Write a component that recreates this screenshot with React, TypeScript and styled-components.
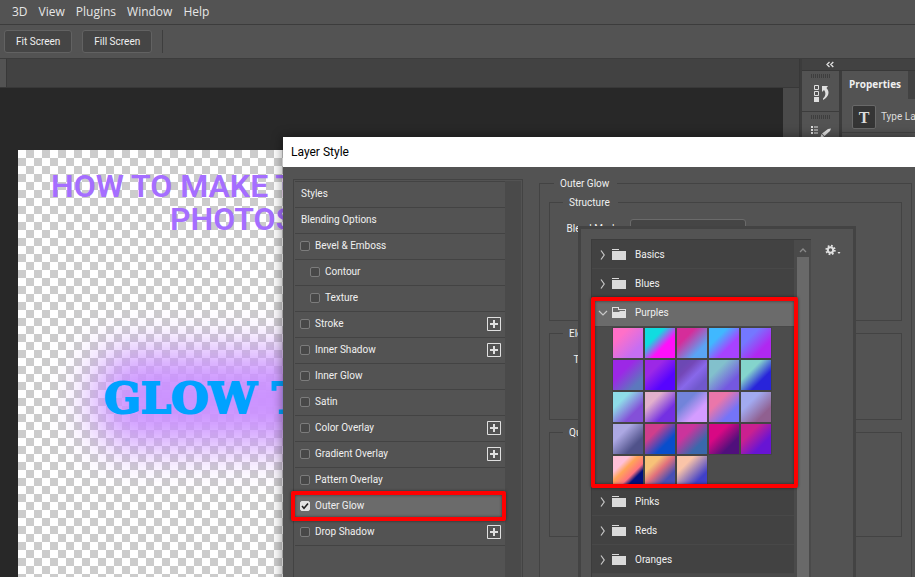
import React from "react";
import styled, { createGlobalStyle } from "styled-components";

const Global = createGlobalStyle`
  * { box-sizing: border-box; }
  html, body, #root { height: 100%; margin: 0; }
  body { overflow: hidden; background: #282828; }
  button, input, select { font: inherit; color: inherit; margin: 0; }
`;

const c = {
  panel: "#535353",
  line: "#434343",
  deep: "#424242",
  gutter: "#4a4a4a",
  text: "#f0f0f0",
  red: "#ff0000",
};

const Page = styled.div`
  position: relative;
  display: flex;
  flex-direction: column;
  height: 100vh;
  overflow: hidden;
  background: ${c.panel};
  color: ${c.text};
  font: 10px/14px Roboto, "Noto Sans", sans-serif;
`;

const MenuBar = styled.nav`
  display: flex;
  gap: 11px;
  height: 25px;
  padding: 0 12px;
  align-items: center;
  border-bottom: 1px solid #3c3c3c;
`;

const MenuButton = styled.button`
  padding: 0;
  border: 0;
  background: none;
  color: #e6e6e6;
  font: 12px/16px "Open Sans", sans-serif;
`;

const OptionsBar = styled.div`
  display: flex;
  align-items: center;
  gap: 10px;
  height: 34px;
  padding: 0 4px;
  border-bottom: 1px solid #3c3c3c;
`;

const OptionButton = styled.button`
  height: 23px;
  padding: 0 11px;
  border: 1px solid #626262;
  border-radius: 3px;
  background: #454545;
  white-space: nowrap;
`;

const Divider = styled.span`
  width: 1px;
  height: 23px;
  background: #3e3e3e;
`;

const Workspace = styled.div`
  display: flex;
  flex: 1;
  min-height: 0;
`;

const DocumentPane = styled.main`
  display: flex;
  flex-direction: column;
  flex: 1;
  min-width: 0;
`;

const TabStrip = styled.div`
  height: 29px;
  background: ${c.deep};
  border-bottom: 1px solid #383838;
`;

const DocumentTab = styled.div`
  width: 7px;
  height: 28px;
  background: ${c.panel};
  border-right: 1px solid #383838;
`;

const CanvasRow = styled.div`
  display: flex;
  flex: 1;
  min-height: 0;
`;

const CanvasArea = styled.div`
  flex: 1;
  min-width: 0;
  display: flex;
  padding: 62px 60px 0 18px;
  background: #282828;
`;

const CanvasScroll = styled.div`
  width: 16px;
  background: ${c.gutter};
`;

const Artboard = styled.div`
  flex: 1;
  overflow: hidden;
  white-space: nowrap;
  padding-top: 20px;
  background: repeating-conic-gradient(#ccc 0 25%, #fff 0 50%) 0 0 / 16px 16px;
`;

const Headline = styled.div<{ $indent: number }>`
  padding-left: ${(p) => p.$indent}px;
  font: 600 32px/33px Roboto, sans-serif;
  color: #a56eff;
`;

const Glow = styled.div`
  position: relative;
  isolation: isolate;
  width: 400px;
  height: 40px;
  margin: 143px 0 0 86px;
  font: 700 43px/38px "DejaVu Serif", serif;
  color: #00a2ff;
  -webkit-text-stroke: 2px #00a2ff;
  &::before {
    content: "";
    position: absolute;
    z-index: -1;
    inset: -26px -8px;
    border-radius: 30px;
    background: #cb92ff;
    filter: blur(22px);
  }
`;

const Dock = styled.aside`
  width: 116px;
  display: flex;
  flex-direction: column;
  border-left: 1px solid #383838;
  background: #3c3c3c;
`;

const DockHeader = styled.div`
  height: 12px;
  margin-left: 2px;
  background: ${c.deep};
  padding: 2px 0 0 24px;
  border-bottom: 1px solid #383838;
  svg { display: block; }
`;

const DockColumns = styled.div`
  display: flex;
  gap: 3px;
  flex: 1;
  padding-left: 2px;
`;

const IconColumn = styled.div`
  width: 37px;
  display: flex;
  flex-direction: column;
  gap: 1px;
`;

const DockIcon = styled.button`
  display: flex;
  height: 40px;
  padding: 3px 0 0 9px;
  border: 0;
  background: ${c.panel};
  svg { display: block; flex: none; }
`;

const Properties = styled.div`
  flex: 1;
  min-width: 0;
  background: ${c.panel};
  overflow: hidden;
`;

const PropertyTabs = styled.div`
  display: flex;
  height: 28px;
  background: ${c.deep};
`;

const PropertyTab = styled.button`
  width: 66px;
  padding: 0 0 2px;
  border: 0;
  flex: none;
  background: ${c.panel};
  font: 700 10px/14px "Open Sans", sans-serif;
`;

const TypeRow = styled.div`
  display: flex;
  align-items: center;
  gap: 5px;
  height: 34px;
  padding: 2px 0 0 10px;
  border-bottom: 1px solid ${c.line};
  white-space: nowrap;
  color: #dcdcdc;
`;

const TypeIcon = styled.span`
  flex: none;
  width: 24px;
  height: 24px;
  border: 1px solid #696969;
  border-radius: 2px;
  background: #353535;
  text-align: center;
  font: 700 16px/23px "Liberation Serif", serif;
`;

const Dialog = styled.section`
  position: absolute;
  left: 283px;
  top: 137px;
  right: 0;
  bottom: -20px;
  display: flex;
  flex-direction: column;
  background: ${c.panel};
  box-shadow: 0 0 10px 1px rgba(0, 0, 0, 0.4);
`;

const DialogTitle = styled.h1`
  margin: 0;
  padding: 0 8px;
  background: #fff;
  color: #000;
  font: 400 12px/30px Roboto, sans-serif;
`;

const DialogBody = styled.div`
  position: relative;
  display: flex;
  flex: 1;
  gap: 16px;
  padding: 0 3px 0 10px;
`;

const StylePanel = styled.div`
  position: relative;
  width: 230px;
  margin-top: 12px;
  padding: 1px;
  display: flex;
  border: 1px solid ${c.line};
`;

const StyleList = styled.ul`
  flex: 1;
  margin: 0;
  padding: 0;
  list-style: none;
`;

const StyleGutter = styled.div`
  width: 16px;
  background: ${c.gutter};
`;

const StyleRow = styled.li<{ $selected?: boolean; $heading?: boolean }>`
  display: flex;
  align-items: center;
  height: 26px;
  padding: 0 4px 1px ${(p) => (p.$heading ? 6 : 5)}px;
  border-top: 1px solid ${c.line};
  background: ${(p) => (p.$selected ? "#6b6b6b" : "transparent")};
`;

const StyleLabel = styled.label<{ $nested?: boolean }>`
  display: flex;
  align-items: center;
  gap: 5px;
  flex: 1;
  padding-left: ${(p) => (p.$nested ? 10 : 0)}px;
`;

const Check = styled.input`
  appearance: none;
  width: 10px;
  height: 10px;
  border: 1px solid #7c7c7c;
  border-radius: 2px;
  background: #484848;
  &:checked {
    border-color: #e4e4e4;
    background: #e4e4e4
      url("data:image/svg+xml,%3Csvg xmlns='http://www.w3.org/2000/svg' viewBox='0 0 8 8'%3E%3Cpath d='M1 4l2 2.2L7 1.6' fill='none' stroke='%23222' stroke-width='1.6'/%3E%3C/svg%3E")
      center / 8px 8px no-repeat;
  }
`;

const AddButton = styled.button`
  width: 14px;
  height: 14px;
  padding: 0;
  border: 0;
  background: none;
  svg { display: block; }
`;

const Callout = styled.div<{ $left: number; $top: number; $w: number; $h: number }>`
  position: absolute;
  left: ${(p) => p.$left}px;
  top: ${(p) => p.$top}px;
  width: ${(p) => p.$w}px;
  height: ${(p) => p.$h}px;
  border: 4px solid ${c.red};
  border-radius: 2px;
  box-shadow: 0 0 3px rgba(0, 0, 0, 0.5), inset 0 0 3px rgba(0, 0, 0, 0.5);
  pointer-events: none;
`;

const Settings = styled.fieldset`
  flex: 1;
  min-width: 0;
  margin: 9px 0 0;
  padding: 5px 9px;
  border: 1px solid ${c.line};
`;

const Legend = styled.legend`
  margin-left: 5px;
  padding: 1px 8px 0 6px;
  line-height: 13px;
`;

const Group = styled.fieldset<{ $h: number }>`
  height: ${(p) => p.$h}px;
  margin: 0 0 5px;
  min-width: 0;
  padding: 10px 9px 0 8px;
  border: 1px solid ${c.line};
`;

const Field = styled.div`
  display: flex;
  align-items: flex-start;
  gap: 8px;
  label { width: 64px; text-align: right; padding-top: 3px; white-space: nowrap; }
`;

const Select = styled.select`
  appearance: none;
  width: 116px;
  height: 28px;
  padding: 0 8px;
  border: 1px solid #6a6a6a;
  border-radius: 3px;
  background: #454545;
`;

const Picker = styled.div`
  position: absolute;
  left: 295px;
  top: 59px;
  width: 278px;
  bottom: 0;
  display: flex;
  justify-content: space-between;
  padding: 10px 12px 0 10px;
  border: 3px solid ${c.line};
  border-bottom: 0;
  background: ${c.panel};
`;

const PresetList = styled.div`
  width: 220px;
  display: flex;
  border-top: 1px solid #3c3c3c;
  border-left: 1px solid #3c3c3c;
  background: ${c.gutter};
`;

const Folders = styled.div`
  flex: 1;
`;

const FolderRow = styled.button<{ $open?: boolean }>`
  display: flex;
  align-items: center;
  width: 100%;
  height: 29px;
  padding: 2px 8px 0;
  border: 0;
  border-bottom: 1px solid #484848;
  background: ${(p) => (p.$open ? "#6b6b6b" : c.deep)};
  text-align: left;
  svg { display: block; overflow: visible; }
  svg + svg { margin-right: 8px; }
`;

const Swatches = styled.div`
  display: grid;
  grid-template-columns: repeat(5, 30px);
  grid-auto-rows: 30px;
  gap: 2px;
  height: 160px;
  padding: 1px 0 0 21px;
  overflow: hidden;
  background: #4c4c4c;
`;

const Swatch = styled.button<{ $stops: string }>`
  padding: 0;
  border: 0;
  background: linear-gradient(135deg, ${(p) => p.$stops});
  outline: 1px solid #444;
`;

const PresetScroll = styled.div`
  width: 17px;
  display: flex;
  flex-direction: column;
  padding: 7px 2px 0 3px;
  svg { display: block; margin: 0 0 4px 2px; }
`;

const Thumb = styled.div`
  flex: 1;
  background: #696969;
`;

const GearButton = styled.button`
  width: 16px;
  height: 22px;
  padding: 0;
  border: 0;
  background: none;
  svg { display: block; }
`;

const layerStyles = [
  { name: "Bevel & Emboss" },
  { name: "Contour", nested: true },
  { name: "Texture", nested: true },
  { name: "Stroke", add: true },
  { name: "Inner Shadow", add: true },
  { name: "Inner Glow" },
  { name: "Satin" },
  { name: "Color Overlay", add: true },
  { name: "Gradient Overlay", add: true },
  { name: "Pattern Overlay" },
  { name: "Outer Glow", on: true },
  { name: "Drop Shadow", add: true },
];

const purples = [
  "#ff70c8 25%, #c66ef2 75%",
  "#10dce0 32%, #ff10fa 62%",
  "#d52d9a 30%, #5aa4f4 75%",
  "#40b8ff 30%, #a742ff 65%",
  "#7478ff 30%, #b028f0 70%",
  "#9c28e6 35%, #5c78bd 80%",
  "#9c28e6 30%, #5704ff 70%",
  "#6c48b4 20%, #7448b8 32%, #8868ea 55%, #7058cc 80%",
  "#82c0cc 30%, #7458e0 75%",
  "#84d4cc 34%, #2824da 68%",
  "#8edce8 28%, #8450d8 70%",
  "#e2b0cc 28%, #7430e2 70%",
  "#7284da 32%, #d49cff 68%",
  "#ea76aa 32%, #7474f8 72%",
  "#a2aaf0 32%, #906090 75%",
  "#aca8e2 30%, #50528a 72%",
  "#cf3e8c 30%, #084ecc 68%",
  "#cb349c 32%, #3a68ac 72%",
  "#d80884 32%, #50107c 72%",
  "#ca2090 30%, #6814d4 70%",
  "#ffc0d8 27%, #ffa458 42%, #ff727e 62%, #00107e 74%",
  "#f7c278 27%, #e0707c 48%, #4850b4 75%",
  "#fac4a8 28%, #4040c8 76%",
];

const Chevron = ({ open }: { open?: boolean }) => (
  <svg width="12" height="12" viewBox="0 0 12 12" fill="none" stroke="#c8c8c8" strokeWidth="1.2">
    <path d={open ? "M-1 4 3 8 7 4" : "M1 1.5 4.2 6 1 10.5"} />
  </svg>
);

const Folder = ({ open }: { open?: boolean }) => (
  <svg width="15" height="12" viewBox="0 0 15 12">
    {open ? (
      <path fill="#e0e0e0" fillRule="evenodd" d="M0 0h7v2h7v9H0zM1 1v4h6l1-1h5V3H6V1z" />
    ) : (
      <path fill="#dadada" d="M0 0h7v1H0zM0 2h14v9H0z" />
    )}
  </svg>
);

const Preset = ({ name, open }: { name: string; open?: boolean }) => (
  <FolderRow $open={open} aria-expanded={!!open}>
    <Chevron open={open} />
    <Folder open={open} />
    {name}
  </FolderRow>
);

const Grip = () => (
  <g stroke="#3e3e3e">
    {Array.from({ length: 10 }, (_, i) => (
      <path key={i} d={`M${i * 2 + 0.5} 0v4`} />
    ))}
  </g>
);

export default function App() {
  return (
    <Page>
      <Global />
      <MenuBar aria-label="Main menu">
        {["3D", "View", "Plugins", "Window", "Help"].map((m) => (
          <MenuButton key={m}>{m}</MenuButton>
        ))}
      </MenuBar>
      <OptionsBar>
        <OptionButton>Fit Screen</OptionButton>
        <OptionButton>Fill Screen</OptionButton>
        <Divider />
      </OptionsBar>

      <Workspace>
        <DocumentPane>
          <TabStrip>
            <DocumentTab />
          </TabStrip>
          <CanvasRow>
            <CanvasArea>
              <Artboard>
                <Headline $indent={33}>HOW TO MAKE T</Headline>
                <Headline $indent={152}>PHOTOS</Headline>
                <Glow>GLOW T</Glow>
              </Artboard>
            </CanvasArea>
            <CanvasScroll />
          </CanvasRow>
        </DocumentPane>

        <Dock>
          <DockHeader>
            <svg width="8" height="7" viewBox="0 0 8 7" fill="none" stroke="#e0e0e0" strokeWidth="1.3">
              <path d="M3.5 1 1 3.5 3.5 6M7.3 1 4.8 3.5 7.3 6" />
            </svg>
          </DockHeader>
          <DockColumns>
            <IconColumn>
              <DockIcon aria-label="History">
                <svg width="20" height="30" viewBox="0 0 20 30" fill="none">
                  <Grip />
                  <path d="M3.5 11.5h4v4h-4zM3.5 17.5h4v4h-4z" stroke="#e0e0e0" />
                  <path d="M3 23h5v5H3z" fill="#e0e0e0" />
                  <path d="M11 12h6l-1.5 2c3.500 3.500 2.500 9-3.500 12v-1.500c3-2.500 3-6 1-8.500L11 18z" fill="#e0e0e0" />
                </svg>
              </DockIcon>
              <DockIcon aria-label="Brushes">
                <svg width="22" height="30" viewBox="0 0 22 30" fill="none">
                  <Grip />
                  <path d="M0 11h2v2H0zM0 14h2v2H0zM0 17h2v2H0zM3 11.500h4v1H3zM3 14.500h4v1H3zM3 17.500h4v1H3z" fill="#e0e0e0" />
                  <path d="M20 13.500 19 16 13.500 21 11 18.500 17 14zM10.500 19l2.500 2.500-4 2z" fill="#e0e0e0" />
                </svg>
              </DockIcon>
            </IconColumn>
            <Properties>
              <PropertyTabs>
                <PropertyTab>Properties</PropertyTab>
              </PropertyTabs>
              <TypeRow>
                <TypeIcon>T</TypeIcon>
                Type Layer
              </TypeRow>
            </Properties>
          </DockColumns>
        </Dock>
      </Workspace>

      <Dialog role="dialog" aria-labelledby="dialog-title">
        <DialogTitle id="dialog-title">Layer Style</DialogTitle>
        <DialogBody>
          <StylePanel>
            <StyleList>
              <StyleRow $heading>Styles</StyleRow>
              <StyleRow $heading>Blending Options</StyleRow>
              {layerStyles.map((s) => (
                <StyleRow key={s.name} $selected={s.on}>
                  <StyleLabel $nested={s.nested}>
                    <Check type="checkbox" defaultChecked={s.on} />
                    {s.name}
                  </StyleLabel>
                  {s.add && (
                    <AddButton aria-label={`Add ${s.name}`}>
                      <svg width="14" height="14" viewBox="0 0 14 14" fill="none" stroke="#e0e0e0">
                        <path d="M.5.5h13v13H.5z" />
                        <path d="M7 3v8M3 7h8" strokeWidth="2" />
                      </svg>
                    </AddButton>
                  )}
                </StyleRow>
              ))}
              <StyleRow />
            </StyleList>
            <StyleGutter />
            <Callout $left={-3} $top={311} $w={215} $h={30} />
          </StylePanel>

          <Settings>
            <Legend>Outer Glow</Legend>
            <Group $h={126}>
              <Legend>Structure</Legend>
              <Field>
                <label htmlFor="blend">Blend Mode:</label>
                <Select id="blend" defaultValue="Screen">
                  <option>Screen</option>
                </Select>
              </Field>
            </Group>
            <Group $h={94}>
              <Legend>Elements</Legend>
              <Field>
                <label htmlFor="technique">Technique:</label>
                <Select id="technique" defaultValue="Softer">
                  <option>Softer</option>
                </Select>
              </Field>
            </Group>
            <Group $h={112}>
              <Legend>Quality</Legend>
            </Group>
          </Settings>

          <Picker>
            <PresetList>
              <Folders>
                <Preset name="Basics" />
                <Preset name="Blues" />
                <Preset name="Purples" open />
                <Swatches>
                  {purples.map((stops, i) => (
                    <Swatch key={i} $stops={stops} aria-label={`Purple ${i + 1}`} />
                  ))}
                </Swatches>
                <Preset name="Pinks" />
                <Preset name="Reds" />
                <Preset name="Oranges" />
              </Folders>
              <PresetScroll>
                <svg width="8" height="6" viewBox="0 0 8 6" fill="none" stroke="#8a8a8a" strokeWidth="1.3">
                  <path d="M1 5 4 2 7 5" />
                </svg>
                <Thumb />
              </PresetScroll>
            </PresetList>
            <GearButton aria-label="Preset options">
              <svg width="16" height="12" viewBox="0 0 16 12">
                <g fill="none" stroke="#e0e0e0">
                  <circle cx="5.500" cy="6" r="2.700" strokeWidth="2" />
                  <circle cx="5.500" cy="6" r="4.300" strokeWidth="1.800" strokeDasharray="1.700 1.677" />
                </g>
                <path d="M12.500 8h3l-1.500 2z" fill="#e0e0e0" />
              </svg>
            </GearButton>
            <Callout $left={10} $top={68} $w={207} $h={191} />
          </Picker>
        </DialogBody>
      </Dialog>
    </Page>
  );
}
